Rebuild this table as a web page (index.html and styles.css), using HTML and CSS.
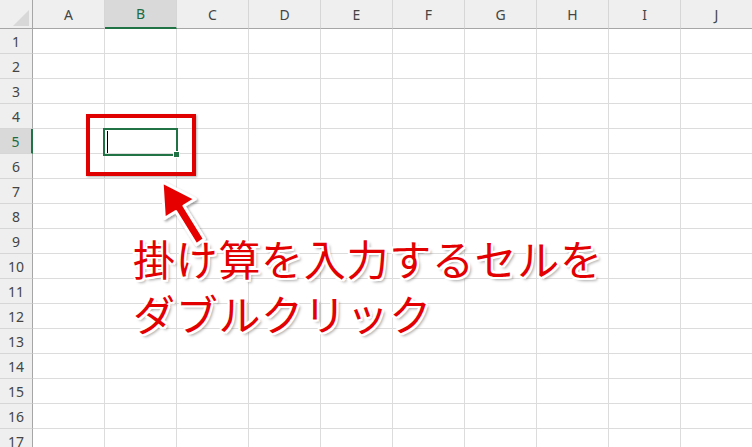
FILE: index.html
```html
<!DOCTYPE html>
<html lang="ja">
<head>
<meta charset="utf-8">
<link rel="stylesheet" href="styles.css">
</head>
<body>
<div class="stage">
  <div class="sheet">
    <div class="corner"><span class="tri"></span></div>
    <div class="ch">A</div><div class="ch sel">B</div><div class="ch">C</div><div class="ch">D</div><div class="ch">E</div><div class="ch">F</div><div class="ch">G</div><div class="ch">H</div><div class="ch">I</div><div class="ch">J</div>
  </div>
  <div class="selbox"><span class="caret"></span><span class="handle"></span></div>
  <div class="redbox"></div>
  <svg class="arrow" width="80" height="80" viewBox="145 175 60 70">
    <defs>
      <filter id="sh" x="-30%" y="-30%" width="160%" height="160%">
        <feDropShadow dx="1.5" dy="1.5" stdDeviation="1" flood-color="#000" flood-opacity="0.35"/>
      </filter>
    </defs>
    <polygon filter="url(#sh)" points="155,181 184,196 174,202 192,231 185,236 167,207 157,213" fill="#e60000" stroke="#fff" stroke-width="2.5" stroke-linejoin="round"/>
  </svg>
  <div class="note">
    <div class="line">掛け算を入力するセルを</div>
    <div class="line">ダブルクリック</div>
  </div>
</div>
<script>
(function(){
  var s=document.querySelector('.sheet');
  var html='';
  for(var r=1;r<=17;r++){
    html+='<div class="rh'+(r===5?' sel':'')+'">'+r+'</div>';
    for(var c=0;c<10;c++){html+='<div class="cell"></div>';}
  }
  s.insertAdjacentHTML('beforeend',html);
})();
</script>
</body>
</html>
```
FILE: styles.css
```css
html, body { margin: 0; padding: 0; background: #fff; }
body { width: 752px; height: 447px; overflow: hidden; font-family: "Noto Sans", "Liberation Sans", sans-serif; }
.stage { position: relative; width: 752px; height: 447px; overflow: hidden; }
.sheet {
  display: grid;
  grid-template-columns: 33px repeat(10, 72px);
  grid-template-rows: 29px repeat(17, 25px);
  width: 753px;
}
.sheet > div { box-sizing: border-box; }
.corner {
  position: relative;
  background: #efefef;
  border-right: 1px solid #a6a6a6;
  border-bottom: 1px solid #a6a6a6;
}
.tri {
  position: absolute; right: 3px; bottom: 2px;
  width: 0; height: 0;
  border-left: 16px solid transparent;
  border-bottom: 16px solid #d8d8d8;
}
.ch {
  background: #efefef;
  border-right: 1px solid #d6d6d6;
  border-bottom: 1px solid #a6a6a6;
  display: flex; align-items: center; justify-content: center;
  font-size: 14px; color: #444;
}
.ch.sel { background: #d9d9d9; color: #1e6b41; border-bottom: 2px solid #217346; }
.rh {
  background: #efefef;
  border-right: 1px solid #a6a6a6;
  border-bottom: 1px solid #d6d6d6;
  display: flex; align-items: center; justify-content: center;
  font-size: 14px; color: #444;
}
.rh.sel { background: #d9d9d9; color: #1e6b41; border-right: 2px solid #217346; }
.cell { border-right: 1px solid #dcdcdc; border-bottom: 1px solid #dcdcdc; }

.selbox {
  position: absolute; left: 103px; top: 128px;
  width: 75px; height: 28px; box-sizing: border-box;
  border: 2px solid #217346;
}
.caret { position: absolute; left: 2px; top: 1px; width: 1px; height: 22px; background: #000; }
.handle { position: absolute; right: -4px; bottom: -4px; width: 5px; height: 5px; background: #217346; border: 1px solid #fff; }

.redbox {
  position: absolute; left: 86px; top: 114px;
  width: 110px; height: 62px; box-sizing: border-box;
  border: 4px solid #e00000;
  box-shadow: 1px 1px 2px rgba(0,0,0,0.3);
}
.arrow { position: absolute; left: 145px; top: 175px; overflow: visible; }

.note {
  position: absolute; left: 133px; top: 230px;
  font-family: "Noto Sans CJK JP", sans-serif;
  font-size: 42px; line-height: 55px; color: #e30000;
  letter-spacing: 0.7px;
  text-shadow:
    2px 0 0 #fff, -2px 0 0 #fff, 0 2px 0 #fff, 0 -2px 0 #fff,
    2px 2px 0 #fff, -2px -2px 0 #fff, 2px -2px 0 #fff, -2px 2px 0 #fff,
    3px 3px 3px rgba(0,0,0,0.35);
  white-space: nowrap;
}
```
